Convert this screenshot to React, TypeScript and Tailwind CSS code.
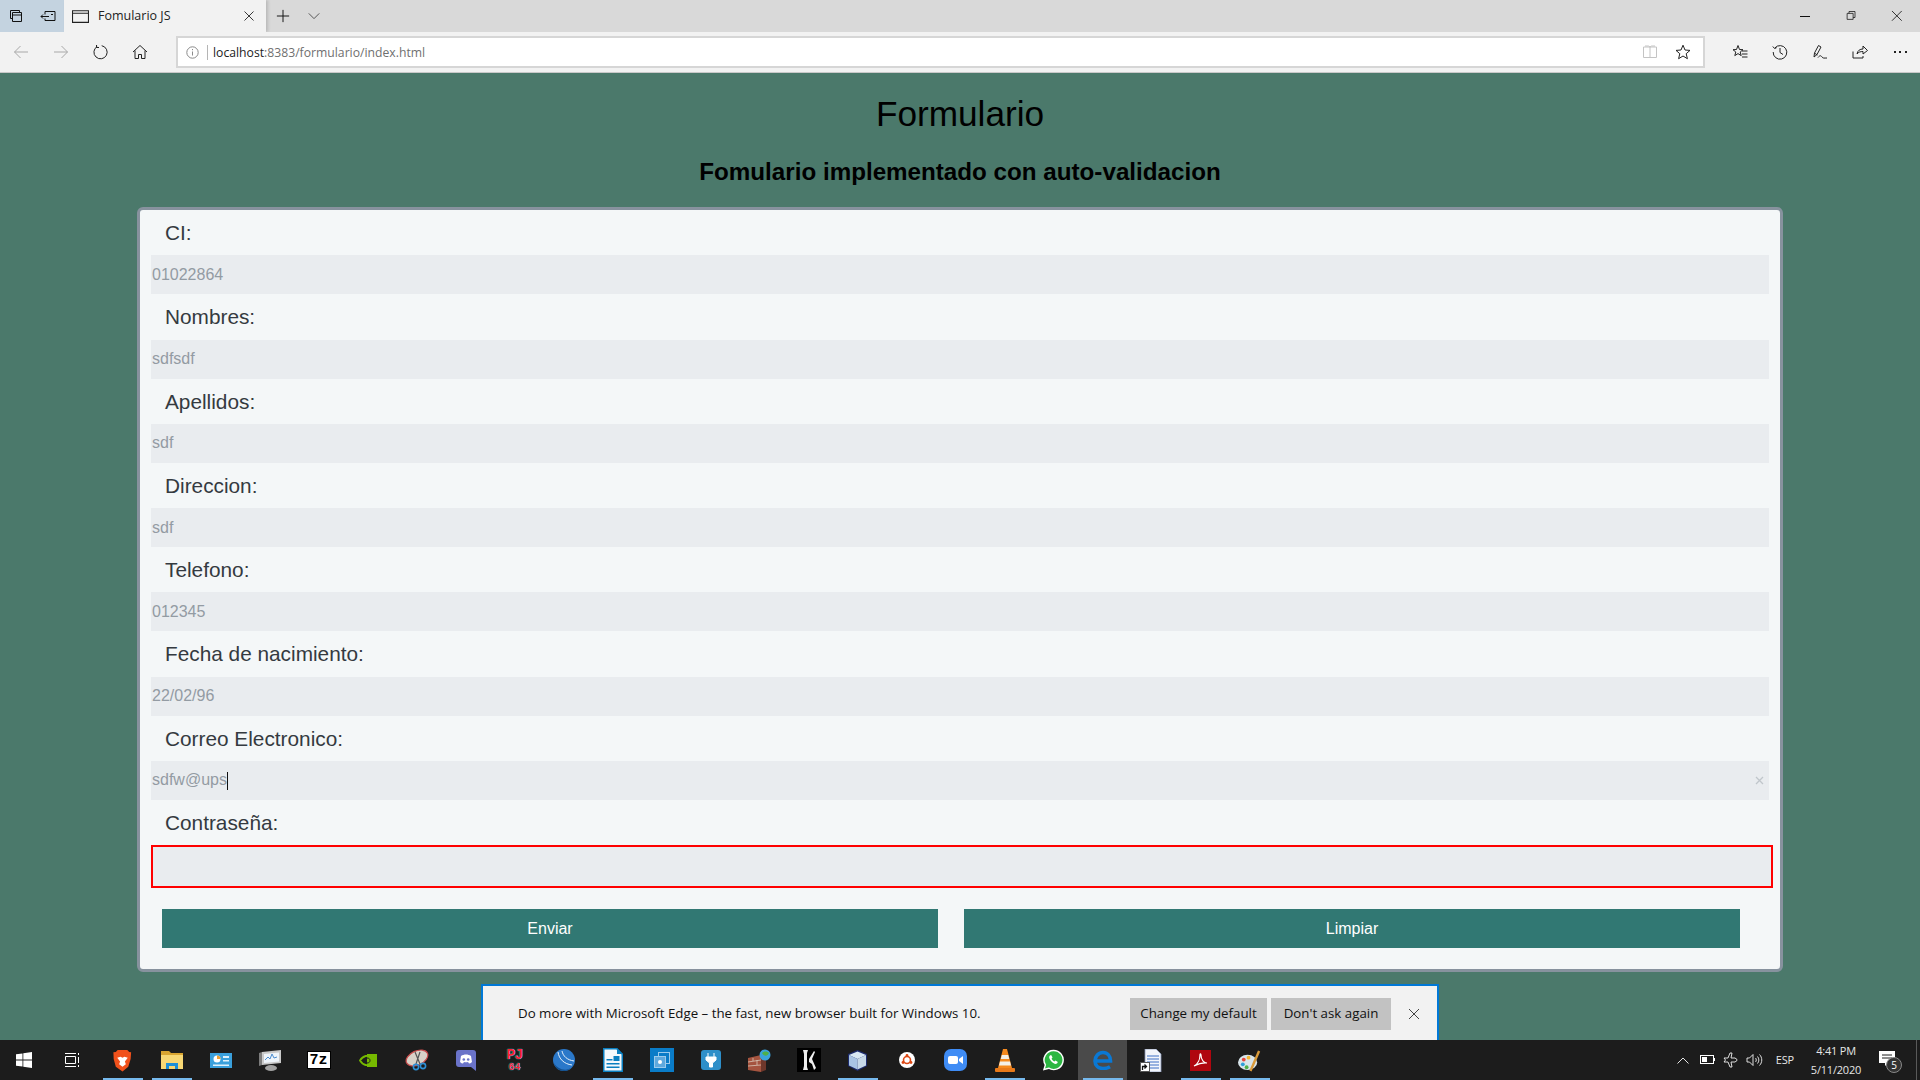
import type { ReactNode } from "react";

const fields = [
  { label: "CI:", value: "01022864" },
  { label: "Nombres:", value: "sdfsdf" },
  { label: "Apellidos:", value: "sdf" },
  { label: "Direccion:", value: "sdf" },
  { label: "Telefono:", value: "012345" },
  { label: "Fecha de nacimiento:", value: "22/02/96" },
];

function Ico({ size = 16, children, className = "" }: { size?: number; children: ReactNode; className?: string }) {
  return (
    <svg width={size} height={size} viewBox="0 0 16 16" fill="none" stroke="currentColor" strokeWidth="1" className={className}>
      {children}
    </svg>
  );
}

function TabBar() {
  return (
    <div className="flex h-8 bg-[#d9d9d9]">
      <div className="flex w-16 bg-[#c4d3e0] text-[#111]">
        <div className="flex w-8 items-center justify-center">
          <Ico>
            <path d="M2.5 2.5h9v2M2.5 2.5v8h2M4.5 4.5h9v9h-9zM4.5 7h9" />
          </Ico>
        </div>
        <div className="flex w-8 items-center justify-center">
          <Ico>
            <path d="M5 3.5h10v9H5v-2M5 3.5v3M1 8.5h8M3 6.5l-2 2 2 2M11 6.500h2" />
          </Ico>
        </div>
      </div>
      <div className="flex w-[202px] items-center bg-[#f2f2f2] pl-2 text-[#222] shadow-[2px_0_3px_rgba(0,0,0,0.15)]">
        <Ico size={17} className="shrink-0">
          <path d="M.5 2.5h15v11H.5zM.5 5h15" />
        </Ico>
        <span className="ml-[9px] flex-1 text-[12.5px]" style={{ fontFamily: '"Open Sans", sans-serif' }}>
          Fomulario JS
        </span>
        <Ico size={12} className="mr-[11px] text-[#333]">
          <path d="M2 2l12 12M14 2L2 14" strokeWidth="1.3" />
        </Ico>
      </div>
      <div className="flex items-center text-[#111]">
        <div className="flex w-[32px] items-center justify-center pl-[2px]">
          <Ico size={14}>
            <path d="M8 1v14M1 8h14" strokeWidth="1.1" />
          </Ico>
        </div>
        <div className="flex w-[32px] items-center justify-center text-[#444]">
          <Ico size={14}>
            <path d="M2 5l6 6 6-6" />
          </Ico>
        </div>
      </div>
      <div className="flex-1" />
      <div className="flex h-full items-center text-[#111]">
        <div className="flex w-[46px] items-center justify-center">
          <span className="block h-px w-[10px] bg-[#111]" />
        </div>
        <div className="flex w-[46px] items-center justify-center pl-[2px]">
          <Ico size={12}>
            <path d="M1.5 4.5h8v8h-8zM4 4.5V2h8v8h-2.5" />
          </Ico>
        </div>
        <div className="flex w-[46px] items-center justify-center">
          <Ico size={12}>
            <path d="M1 1l10 10M11 1L1 11" transform="scale(1.3)" strokeWidth=".85" />
          </Ico>
        </div>
      </div>
    </div>
  );
}

function Toolbar() {
  return (
    <div className="flex h-[41px] items-center border-b border-[#c9c9c9] bg-[#f2f2f2]">
      <div className="flex w-[176px] shrink-0 items-center pl-[1px]">
        <div className="flex w-10 justify-center text-[#a8a8a8]">
          <Ico>
            <path d="M15 8H1.5M7.5 2L1.5 8l6 6" />
          </Ico>
        </div>
        <div className="flex w-10 justify-center text-[#a8a8a8]">
          <Ico>
            <path d="M1 8h13.500M8.500 2l6 6-6 6" />
          </Ico>
        </div>
        <div className="flex w-[39px] justify-center text-[#222]">
          <Ico>
            <path d="M4.200 2.500A6.600 6.600 0 1 0 8.700 1.700M3.500 1v2.500H6" />
          </Ico>
        </div>
        <div className="flex w-10 justify-center text-[#222]">
          <Ico>
            <path d="M1 8l7-6.500L15 8M3 6.500v8h3.500v-4h3v4H13v-8" />
          </Ico>
        </div>
      </div>
      <div className="flex h-8 w-[1530px] items-center border-2 border-[#d6d6d6] bg-white">
        <div className="flex w-[29px] items-center justify-center text-[#8a8a8a]">
          <svg width="13" height="13" viewBox="0 0 13 13" fill="none" stroke="currentColor">
            <circle cx="6.5" cy="6.5" r="5.7" />
            <path d="M6.5 5.5v4M6.5 3v1.2" />
          </svg>
        </div>
        <span className="h-[15px] w-px bg-[#b5b5b5]" />
        <span className="mt-[2px] ml-[5px] flex-1 text-[12.2px] text-[#222]" style={{ fontFamily: '"Open Sans", sans-serif' }}>
          localhost<span className="text-[#6f6f6f]">:8383/formulario/index.html</span>
        </span>
        <Ico size={16} className="mr-[17px] text-[#c4c4c4]">
          <path d="M8 3v11M8 3H1.500v10.500H8M8 3h6.500v10.500H8M3 2h3.500L8 3l1.500-1H13" />
        </Ico>
        <Ico size={16} className="mr-[12px] text-[#222]">
          <path d="M8 1.200l2 4.800 5 .4-3.800 3.300 1.200 5L8 12l-4.400 2.700 1.200-5L1 6.400l5-.4z" />
        </Ico>
      </div>
      <div className="flex flex-1 items-center pl-[15px] text-[#222]">
        <div className="flex w-10 justify-center">
          <Ico>
            <path d="M6 1.500l1.500 4 3.500.2-2.800 2.300 1 3.600L6 9.600l-3.200 2 1-3.600L1 5.700l3.500-.2zM10 7h5.500M10 10h5.500M10 13h5.500" />
          </Ico>
        </div>
        <div className="flex w-10 justify-center">
          <Ico>
            <path d="M2.800 4A6.800 6.800 0 1 1 1.200 8M.8 2.500l1.800 2 2-.8M8 4v4.500l3 2" />
          </Ico>
        </div>
        <div className="flex w-10 justify-center">
          <Ico>
            <path d="M2 13l.5-4 4-7.500 2.500 1.500-4 7.500zM3 9.500L5.500 11M6 13.500c2-2.500 3-2 4-.5s2 1 5 1" />
          </Ico>
        </div>
        <div className="flex w-10 justify-center">
          <Ico>
            <path d="M1 7.500V14h10v-2M5 10c.5-3.500 3-5 6-5V2l4.500 4.500L11 10V7.500C8.500 7.500 6.500 8 5 10z" />
          </Ico>
        </div>
        <div className="flex w-10 justify-center gap-[3.5px]">
          <span className="h-[2px] w-[2px] bg-[#222]" />
          <span className="h-[2px] w-[2px] bg-[#222]" />
          <span className="h-[2px] w-[2px] bg-[#222]" />
        </div>
      </div>
    </div>
  );
}

function Label({ children }: { children: ReactNode }) {
  return <label className="block h-[45.25px] pl-[14px] text-[20.8px] leading-[45px] text-[#343a40]">{children}</label>;
}

const inputClass = "block h-[39px] w-full bg-[#e9ecef] px-[1px] text-[16px] text-[#939ba3] outline-none";

function Card() {
  return (
    <form className="mx-auto w-[1646px] rounded-[6px] border-[3px] border-[#87929e] bg-[#f4f7f8]">
      <div className="pr-[11px] pl-[11px]">
        {fields.map((f) => (
          <div key={f.label}>
            <Label>{f.label}</Label>
            <input readOnly value={f.value} className={inputClass} />
          </div>
        ))}
        <Label>Correo Electronico:</Label>
        <div className="relative">
          <input readOnly value="sdfw@ups" className={inputClass} />
          <span className="absolute top-[11px] left-[76px] h-[18px] w-px bg-[#111]" />
          <svg width="9" height="9" viewBox="0 0 9 9" stroke="#c0c6cb" strokeWidth="1.3" className="absolute top-[15px] right-[5px]">
            <path d="M1 1l7 7M8 1L1 8" />
          </svg>
        </div>
        <Label>Contraseña:</Label>
        <input readOnly className="block h-[43px] w-[1622px] border-2 border-[#ff0000] bg-[#e9ecef] outline-none" />
      </div>
      <div className="mt-[21px] mb-[21px] flex gap-[26px] pl-[22px]">
        <button type="button" className="h-[39px] w-[776px] bg-[#317873] text-[16px] text-white">
          Enviar
        </button>
        <button type="button" className="h-[39px] w-[776px] bg-[#317873] text-[16px] text-white">
          Limpiar
        </button>
      </div>
    </form>
  );
}

function Banner() {
  return (
    <div
      className="mx-auto mt-[12px] flex h-[56px] w-[958px] items-center border-x-2 border-t-2 border-[#0078d7] bg-[#f2f2f2] pt-[2px] pl-[35px] text-[13.3px] text-[#111]"
      style={{ fontFamily: '"Open Sans", sans-serif' }}
    >
      <span className="flex-1">Do more with Microsoft Edge – the fast, new browser built for Windows 10.</span>
      <button type="button" className="h-8 w-[137px] bg-[#c2c2c2] pb-[1px]">
        Change my default
      </button>
      <button type="button" className="ml-[4px] h-8 w-[120px] bg-[#c2c2c2] pb-[1px]">
        Don't ask again
      </button>
      <svg width="12" height="12" viewBox="0 0 12 12" stroke="#444" className="mr-[17px] ml-[17px]">
        <path d="M1 1l10 10M11 1L1 11" />
      </svg>
    </div>
  );
}

function Slot({ active, selected, children }: { active?: boolean; selected?: boolean; children: ReactNode }) {
  return (
    <div className={`relative flex h-10 w-[49px] shrink-0 items-center justify-center ${selected ? "bg-[#4a4a4a]" : ""}`}>
      {children}
      {active && <span className="absolute right-[4px] bottom-0 left-[5px] h-[2px] bg-[#76b9ed]" />}
    </div>
  );
}

function Taskbar() {
  return (
    <div className="flex h-10 items-center bg-[#1c1c1c] text-white">
      <Slot>
        <svg width="16" height="16" viewBox="0 0 16 16" fill="#fff" className="mr-[1px]">
          <path d="M0 2.3l6.500-.9v6.200H0zM7.300 1.300L16 0v7.600H7.300zM0 8.400h6.500v6.200L0 13.700zM7.300 8.400H16V16l-8.700-1.200z" />
        </svg>
      </Slot>
      <Slot>
        <svg width="16" height="16" viewBox="0 0 16 16" fill="none" stroke="#fff" className="mr-[3px]">
          <path d="M1 1.500h11M1 14.500h11M1.500 4.500h10v7h-10zM14.500 1v2M14.500 5v6M14.500 13v2" />
        </svg>
      </Slot>
      <Slot active>
        <svg width="21" height="23" viewBox="0 0 20 24">
          <path d="M5 1h10l2 2 2 .5-.5 7-2.500 8L10 23.500 3 18.500.8 10.500.5 3.500 3 3z" fill="#f1511b" />
          <path d="M4.500 9l3.500-1 2 1 2-1 3.500 1-3 4 1 3-3.500 2.500L6.500 16l1-3z" fill="#fff" />
        </svg>
      </Slot>
      <Slot active>
        <svg width="22" height="18" viewBox="0 0 22 18">
          <path d="M0 0h8l2 2h12v16H0z" fill="#d9a531" />
          <path d="M0 4h22v14H0z" fill="#f7d774" />
          <path d="M5 18v-6h12v6h-3v-3H8v3z" fill="#1b8fd8" />
        </svg>
      </Slot>
      <Slot>
        <svg width="22" height="15" viewBox="0 0 22 15">
          <rect width="22" height="15" fill="#3aa0dc" />
          <circle cx="7" cy="6" r="3.500" fill="#fff" />
          <path d="M7 6V2.500A3.500 3.500 0 0 1 10.500 6z" fill="#f0a030" />
          <path d="M13 3h6v2h-6zM13 7h6v1.500h-6zM3 11.500h16V13H3z" fill="#dff1fb" />
        </svg>
      </Slot>
      <Slot>
        <svg width="24" height="22" viewBox="0 0 24 22">
          <path d="M4 3l19-2v13L4 16z" fill="#c9c9c9" />
          <path d="M6 5l15-1.500v9L6 14z" fill="#eef4fa" />
          <path d="M7 11l3-3 2 2 2-5 2 4 3-1" fill="none" stroke="#4a8ccf" />
          <path d="M1 4l3-1v13l-3 1z" fill="#7d7d7d" />
          <ellipse cx="13" cy="19" rx="6" ry="3" fill="#a3a3a3" />
        </svg>
      </Slot>
      <Slot>
        <div className="flex h-[18px] w-[24px] items-center justify-center border-[1.5px] border-black bg-white text-[15px] leading-none font-bold text-black" style={{ fontFamily: '"Liberation Mono", monospace' }}>
          7z
        </div>
      </Slot>
      <Slot>
        <svg width="18" height="13" viewBox="0 0 18 13">
          <rect x="8" width="10" height="13" fill="#76b900" />
          <path d="M1 6.500c3-5 8-6 12-3v6c-4 3-9 2-12-3z" fill="none" stroke="#76b900" strokeWidth="1.8" />
          <path d="M8 4c2 0 3 1 3 2.500S10 9 8 9" fill="none" stroke="#1c1c1c" />
        </svg>
      </Slot>
      <Slot>
        <svg width="24" height="22" viewBox="0 0 24 22">
          <ellipse cx="12" cy="9" rx="11.500" ry="7" transform="rotate(-25 12 9)" fill="#d9d2c8" stroke="#c94c4c" strokeWidth="1.2" />
          <path d="M10 3l5 12M15 3l-4 12" stroke="#555" strokeWidth="1.2" />
          <circle cx="11" cy="18" r="2.600" fill="none" stroke="#2d8fd5" strokeWidth="1.6" />
          <circle cx="18" cy="17" r="2.600" fill="none" stroke="#2d8fd5" strokeWidth="1.6" />
        </svg>
      </Slot>
      <Slot>
        <svg width="20" height="21" viewBox="0 0 20 21">
          <path d="M3 0h14a3 3 0 0 1 3 3v18l-5-4H3a3 3 0 0 1-3-3V3a3 3 0 0 1 3-3z" fill="#6a73c9" />
          <path d="M5 6c3-2 7-2 10 0l1 6c-1 1-2 1.500-3 1.500L12 12c-1 .3-3 .3-4 0l-1 1.500c-1 0-2-.5-3-1.500z" fill="#fff" />
          <circle cx="7.800" cy="9.500" r="1.300" fill="#6a73c9" />
          <circle cx="12.200" cy="9.500" r="1.300" fill="#6a73c9" />
        </svg>
      </Slot>
      <Slot>
        <div className="flex flex-col items-center text-center text-[15px] leading-[14px] font-bold text-[#ff2030] [text-shadow:0_0_1px_#19e3f6,0_0_1px_#19e3f6]" style={{ fontFamily: '"Liberation Mono", monospace' }}>
          <span className="tracking-[-1px]">PJ</span>
          <span className="text-[10px] leading-[9px]">64</span>
        </div>
      </Slot>
      <Slot>
        <svg width="22" height="22" viewBox="0 0 22 22">
          <circle cx="11" cy="11" r="11" fill="#2b78c9" />
          <path d="M5 3c1 7 6 12 14 13M9 2c1 5 5 9 12 10" fill="none" stroke="#e8f2fb" />
          <path d="M1 14c3 6 13 10 19 3-3 3-6 5-9 5-5 0-9-3-10-8z" fill="#12508f" />
        </svg>
      </Slot>
      <Slot active>
        <svg width="20" height="24" viewBox="0 0 20 24">
          <path d="M.75.75h13l5.500 5.500v17H.75z" fill="#f4f9fc" stroke="#0a7fc0" strokeWidth="1.5" />
          <path d="M14 0l6 6h-6z" fill="#0a7fc0" />
          <path d="M3.500 11h6v1.500h-6zM3.500 15h13v1.500h-13zM3.500 18.500h13V20h-13zM10.500 8h6v5h-6z" fill="#0a7fc0" />
        </svg>
      </Slot>
      <Slot>
        <div className="flex h-6 w-6 items-center justify-center bg-[#0a7cc8]">
          <svg width="16" height="16" viewBox="0 0 16 16" fill="none" stroke="#9ccbec">
            <rect x="4.500" y=".5" width="11" height="11" />
            <rect x=".5" y="4.500" width="11" height="11" fill="#5ea9de" />
            <circle cx="6" cy="10" r="2" fill="#fff" stroke="none" />
          </svg>
        </div>
      </Slot>
      <Slot>
        <svg width="20" height="20" viewBox="0 0 20 20">
          <rect width="20" height="20" rx="3" fill="#2e8fc9" />
          <path d="M7 3v4M13 3v4M5 7h10v3l-3.500 3v4h-3v-4L5 10z" fill="#fff" stroke="#fff" />
        </svg>
      </Slot>
      <Slot>
        <svg width="23" height="23" viewBox="0 0 23 23">
          <path d="M0 9l13-3v17L0 21z" fill="#a5543f" />
          <path d="M13 6l5 3v12l-5 2z" fill="#6e372b" />
          <path d="M0 13l13-2M0 17l13-1M5 9v3M9 11v5" stroke="#d9c7b8" strokeWidth=".8" />
          <circle cx="17" cy="6" r="5.500" fill="#3aa3dc" />
          <path d="M14 4c2-2 5-2 7 0-1 3-5 4-7 0z" fill="#4fb04a" />
        </svg>
      </Slot>
      <Slot>
        <svg width="24" height="24" viewBox="0 0 24 24">
          <rect width="24" height="24" fill="#000" />
          <path d="M6 2h5l-1 3v14l1 3H6l1-4V6zM12 11l5-8 1 1-3 7 4 9-2 2-2-6-3-2z" fill="#eee" />
        </svg>
      </Slot>
      <Slot active>
        <svg width="21" height="21" viewBox="0 0 21 21">
          <path d="M10.500 0L20 4v12l-9.500 5L1 16V4z" fill="#1c2a6b" />
          <path d="M10.500 1.500L19 5l-8.500 4L2 5z" fill="#d8e8f4" />
          <path d="M2 5l8.500 4v10.500L2 15.500z" fill="#a9c4e4" />
          <path d="M19 5l-8.500 4v10.500l8.500-4z" fill="#c6d8e8" />
        </svg>
      </Slot>
      <Slot>
        <svg width="16" height="16" viewBox="0 0 16 16">
          <circle cx="8" cy="8" r="8" fill="#fff" />
          <circle cx="8" cy="8" r="3.500" fill="none" stroke="#dd4814" strokeWidth="1.6" />
          <circle cx="8" cy="3.500" r="1.400" fill="#dd4814" />
          <circle cx="4" cy="10.500" r="1.400" fill="#dd4814" />
          <circle cx="12" cy="10.500" r="1.400" fill="#dd4814" />
        </svg>
      </Slot>
      <Slot>
        <svg width="23" height="22" viewBox="0 0 23 22">
          <rect width="23" height="22" rx="7" fill="#3f8cf5" />
          <rect x="4" y="7" width="10" height="8" rx="2" fill="#fff" />
          <path d="M15 10l4-3v8l-4-3z" fill="#fff" />
        </svg>
      </Slot>
      <Slot active>
        <svg width="20" height="23" viewBox="0 0 20 23">
          <path d="M8 0h4l5 19H3z" fill="#f58a1f" />
          <path d="M6.800 6h6.400l1 4H5.800zM5 12.500h10l1 4H4z" fill="#f4f0e8" />
          <rect y="19" width="20" height="4" rx="1" fill="#e8791a" />
        </svg>
      </Slot>
      <Slot>
        <svg width="21" height="22" viewBox="0 0 22 22">
          <path d="M11 1a10 10 0 0 0-8.500 15.200L1 21l5-1.400A10 10 0 1 0 11 1z" fill="#2cb742" stroke="#fff" strokeWidth="1.5" />
          <path d="M7.500 6c-1.500 1-1.500 3 .5 5.500s4.500 4 6 3.500 1.500-2 1.200-2.200L13 11.500l-1 1c-1.500-.5-2.500-1.500-3-3l1-1-1.200-2.500z" fill="#fff" />
        </svg>
      </Slot>
      <Slot active selected>
        <svg width="20" height="20" viewBox="0 0 20 20" fill="none" stroke="#0a78d4" strokeWidth="3.6">
          <path d="M3 11h14.500c0-5-3-8.500-7.500-8.500S2 6.500 2 11s3.500 7.500 8 7.500c3 0 5-.6 7-1.800" />
        </svg>
      </Slot>
      <Slot>
        <div className="relative">
          <svg width="20" height="23" viewBox="0 0 20 23" className="block">
            <path d="M3 0h11l5 5v18H3z" fill="#f2f5fb" stroke="#8a98b8" strokeWidth=".8" />
            <path d="M5 7h12M5 10h12M5 13h12M5 16h12M8 19h9" stroke="#3d6ec5" />
          </svg>
          <span className="absolute bottom-0 left-[-2px] flex h-[10px] w-[10px] border border-[#555] bg-white">
            <svg width="8" height="8" viewBox="0 0 8 8" stroke="#111" fill="none" strokeWidth="1.3">
              <path d="M1.500 7V3.500H5M3.500 1.500L5.500 3.500 3.500 5.500" />
            </svg>
          </span>
        </div>
      </Slot>
      <Slot active>
        <div className="flex h-[21px] w-[21px] items-center justify-center bg-[#b0060f]">
          <svg width="15" height="15" viewBox="0 0 15 15" fill="none" stroke="#fff" strokeWidth="1.2">
            <path d="M1 13c4-2 6-7 6-11 0-2 1-1 1 0 0 5 3 8 6 8-4-.5-9 1-13 3z" />
          </svg>
        </div>
      </Slot>
      <Slot active>
        <svg width="23" height="23" viewBox="0 0 24 24">
          <ellipse cx="10" cy="14" rx="10" ry="8" fill="#d8e4ea" />
          <circle cx="6" cy="11" r="2" fill="#e8443a" />
          <circle cx="11" cy="9" r="2" fill="#f2b632" />
          <circle cx="5" cy="16" r="2" fill="#2f9fd8" />
          <circle cx="9" cy="19" r="2" fill="#4fb04a" />
          <path d="M13 23l9-21" stroke="#d99a3a" strokeWidth="2.5" />
        </svg>
      </Slot>

      <div className="flex-1" />
      <div className="flex items-center text-[#e6e6e6]" style={{ fontFamily: '"Open Sans", sans-serif' }}>
        <svg width="12" height="7" viewBox="0 0 12 7" fill="none" stroke="#e6e6e6" className="mr-[11px]">
          <path d="M.5 6.500L6 1l5.500 5.500" />
        </svg>
        <svg width="15" height="10" viewBox="0 0 15 10" fill="none" stroke="#fff" className="mr-[8px]">
          <rect x=".5" y=".5" width="13" height="8" />
          <rect x="2" y="2" width="5" height="5" fill="#fff" stroke="none" />
          <path d="M14.500 3v3" />
        </svg>
        <svg width="16" height="16" viewBox="0 0 16 16" fill="none" stroke="#f2f2f2" strokeWidth=".9" className="mr-[7px]">
          <path d="M1 6h4L7 1h2L8 6h4l2 1.500.5.5-.5.500L12 10H8l1 5H7l-2-5H1l1.500-2z" />
        </svg>
        <svg width="17" height="14" viewBox="0 0 17 14" fill="none" stroke="#f2f2f2" strokeWidth=".9" className="mr-[13px]">
          <path d="M1 5v4h2.500L7 12.500V1.500L3.500 5zM9.500 5c1 1 1 3 0 4M11.500 3.500c1.800 2 1.800 5 0 7M13.500 1.500c3 3 3 8 0 11" />
        </svg>
        <span className="mr-[13px] text-[11px] tracking-[-0.2px]">ESP</span>
        <div className="mr-[12px] flex w-[58px] flex-col items-center text-[11px] leading-[19px] tracking-[-0.2px]">
          <span>4:41 PM</span>
          <span>5/11/2020</span>
        </div>
        <div className="relative mr-[13px] h-[28px] w-[26px]">
          <svg width="16" height="15" viewBox="0 0 16 15" className="absolute top-[5px] left-[2px]">
            <path d="M0 0h16v12H9l-3 3v-3H0z" fill="#fff" />
            <path d="M3 4h10M3 7h10" stroke="#1c1c1c" />
          </svg>
          <span className="absolute top-[11px] left-[9px] flex h-4 w-4 items-center justify-center rounded-full border border-[#888] bg-[#333] text-[10px] text-white">
            5
          </span>
        </div>
        <span className="h-10 w-[4px] border-l border-[#5a5a5a]" />
      </div>
    </div>
  );
}

export default function App() {
  return (
    <div className="flex h-screen flex-col overflow-hidden bg-[#4b796b]" style={{ fontFamily: '"Liberation Sans", Arial, sans-serif' }}>
      <TabBar />
      <Toolbar />
      <main className="flex min-h-0 flex-1 flex-col">
        <h1 className="mt-[20px] text-center text-[35.2px] leading-[42px] text-black">Formulario</h1>
        <h2 className="mt-[22px] text-center text-[24.2px] leading-[30px] font-bold text-black">Fomulario implementado con auto-validacion</h2>
        <div className="mt-[20px]">
          <Card />
        </div>
        <Banner />
      </main>
      <Taskbar />
    </div>
  );
}
